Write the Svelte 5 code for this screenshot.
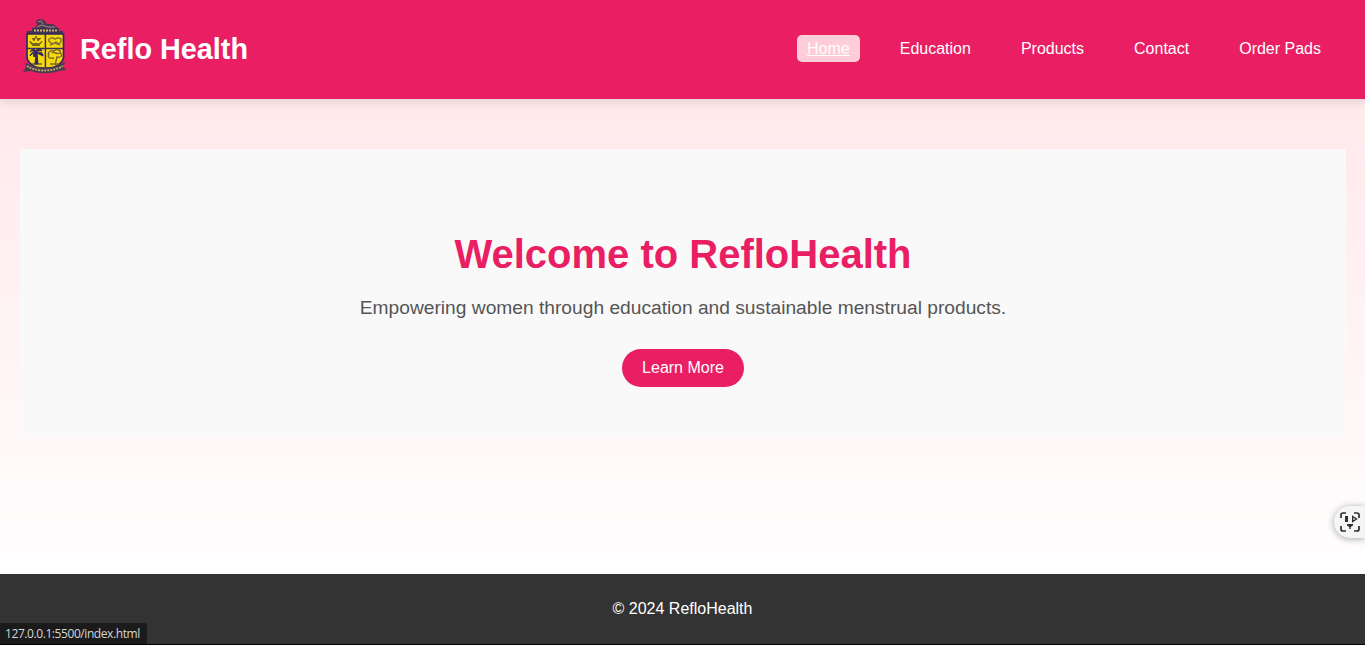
<script>
  const links = ['Home', 'Education', 'Products', 'Contact', 'Order Pads'];
</script>

<div class="page">
  <header>
    <div class="brand">
      <svg class="crest" viewBox="0 0 46 58" aria-hidden="true">
        <path d="M12 10L15 7L14 3L17 1L22 2L25 6L31 6L35 9V11H11Z" fill="#4c3750" />
        <path d="M16 4l3-1 2 3M15 9l5-2 6 2 7 0" fill="none" stroke="#a58b91" stroke-width="1" />
        <path d="M10 10H37V13H41V16H5V13H10Z" fill="#403455" />
        <path d="M12 12.5H36" stroke="#cbb35f" stroke-width="1.8" stroke-dasharray="2 1" />
        <path d="M5 16H41.5V39C41.5 45 35 49 23 53C11 49 5 45 5 39Z" fill="#f7d80d" stroke="#302761" stroke-width="1.7" />
        <path d="M23.4 16V51M5 30.5H41" stroke="#3c3152" stroke-width="1.5" />
        <path d="M8 23C8 29 19 29 20 23C18 26 16 26 14 25C12 26 10 26 8 23ZM10 20l2 3 2-5 2 5 3-3M10 27.5h8" fill="#756324" stroke="#655523" stroke-width=".8" />
        <path d="M27 23c-1-3 3-4 6-2 3-2 7-1 6 2 0 3-3 3-5 1-2 2-6 2-7-1ZM28 27l5-2 5 2" fill="none" stroke="#82712a" stroke-width="1.5" />
        <path d="M14 35l-1 11h3l-1-11M8 38c1-4 4-4 6-3-3-3-5-2-6-1 2-4 5-3 6-1 1-3 5-3 6 0-2-1-4-1-5 2 4-2 6 0 6 3l-6-3-3 4-1-4ZM10 46h10" fill="#302761" stroke="#302761" stroke-width="1" />
        <path d="M27 37c-2-3 2-5 5-4 3-3 7-1 6 2 4 2 0 5-3 4l-2 8M32 40c-5 1-7-1-5-4M30 35c2-2 5 2 7 0M28 46h9" fill="none" stroke="#7d6b28" stroke-width="1.4" />
        <path d="M3 45L10 47C18 50 28 50 36 47L44 44L41 48L44 52L37 53C29 56 17 56 9 53L1 54L4 49Z" fill="#4a3c50" />
        <path d="M5 48C14 54 31 54 41 48" fill="none" stroke="#bda866" stroke-width="1.8" stroke-dasharray="2 1" />
      </svg>
      <span class="name">Reflo Health</span>
    </div>
    <nav>
      {#each links as link, i}
        <a href="#top" class:active={i === 0}>{link}</a>
      {/each}
    </nav>
  </header>

  <main>
    <section>
      <h1>Welcome to RefloHealth</h1>
      <p>Empowering women through education and sustainable menstrual products.</p>
      <a class="button" href="#top">Learn More</a>
    </section>
  </main>

  <footer>© 2024 RefloHealth</footer>

  <div class="status"><span>127.0.0.1:5500/index.html</span></div>
  <div class="capture">
    <svg width="20" height="20" viewBox="0 0 20 20" fill="none" stroke="#303030" stroke-width="1.7" aria-hidden="true">
      <path d="M1 6V3Q1 1 3 1H6M14 1H17Q19 1 19 3V6M19 14V17Q19 19 17 19H14M6 19H3Q1 19 1 17V14" />
      <path d="M5 4H8V10H5Z" fill="#303030" stroke="none" />
      <path d="M12.7 4.5L16.5 7L12.7 9.5Z" stroke-width="1.4" />
      <path d="M7 12H13V13.5L10.7 15V17H9.3V15L7 13.5Z" fill="#303030" stroke="none" />
    </svg>
  </div>
</div>

<style>
  :global(body) { margin: 0; overflow: hidden; }
  .page {
    position: relative;
    box-sizing: border-box;
    height: 645px;
    display: flex;
    flex-direction: column;
    overflow: hidden;
    border-bottom: 1px solid #000;
    background: linear-gradient(#ffe9eb 99px, #fffefe 574px);
    font-family: "Liberation Sans", Arial, sans-serif;
    font-size: 16px;
  }
  header {
    box-sizing: border-box;
    height: 99px;
    flex-shrink: 0;
    display: flex;
    justify-content: space-between;
    padding: 0 34px 0 22px;
    background: #e91e63;
    box-shadow: 0 4px 8px rgba(0, 0, 0, .1);
    color: #fff;
  }
  .brand { display: flex; align-items: flex-start; }
  .crest { width: 46px; height: 58px; margin-top: 18px; }
  .name { margin: 33px 0 0 12px; font-size: 28.8px; line-height: 33px; font-weight: 700; }
  nav { display: flex; align-items: flex-start; gap: 30px; padding-top: 35px; }
  nav a { padding: 5px 10px; border-radius: 5px; line-height: 17px; color: #fff; text-decoration: none; }
  nav .active { background: #ffcdd9; text-decoration: underline; }
  main { flex: 1; padding: 50px 19px 0 20px; }
  section {
    box-sizing: border-box;
    height: 286px;
    display: flex;
    flex-direction: column;
    align-items: center;
    padding-top: 82px;
    background: #f9f9f9;
  }
  h1 { margin: 0; color: #e91e63; font-size: 40px; line-height: 46px; }
  p { margin: 20px 0 0; color: #555; font-size: 19.2px; line-height: 22px; }
  .button { margin-top: 30px; padding: 10px 20px; border-radius: 25px; background: #e91e63; color: #fff; line-height: 18px; text-decoration: none; }
  footer { height: 70px; display: flex; align-items: center; justify-content: center; background: #333; color: #fff; }
  .status {
    position: absolute;
    left: 0;
    bottom: 0;
    box-sizing: border-box;
    width: 147px;
    height: 21px;
    padding-left: 5px;
    border-radius: 0 3px 0 0;
    background: #1b1b1b;
    color: #d6d6d6;
    font: 12px/21px "Open Sans", "Noto Sans", sans-serif;
    letter-spacing: -.42px;
    white-space: nowrap;
  }
  .capture {
    position: absolute;
    right: 0;
    top: 506px;
    box-sizing: border-box;
    width: 31px;
    height: 32px;
    padding: 6px 0 0 6px;
    border-radius: 16px 0 0 16px;
    background: #f5f5f5;
    box-shadow: 0 1px 7px rgba(0, 0, 0, .35);
  }
</style>
